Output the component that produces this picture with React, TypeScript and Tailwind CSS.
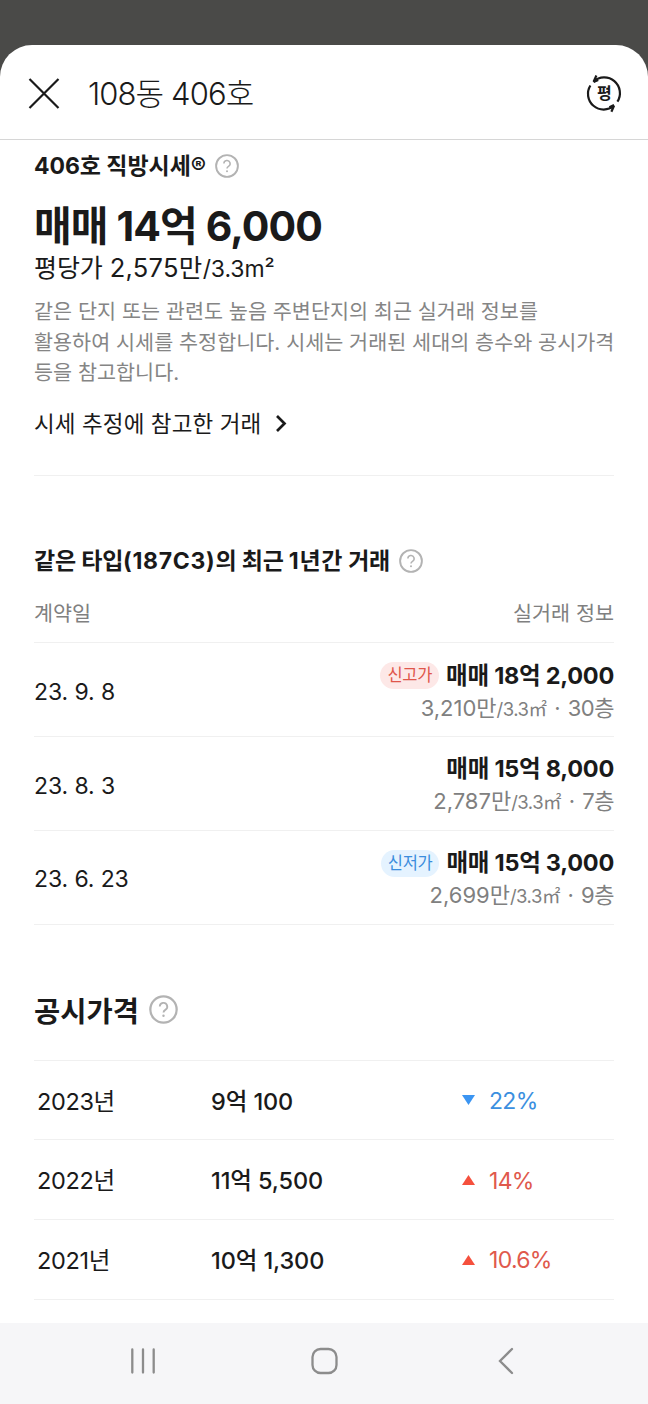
import { FC } from "react";

interface Deal {
  date: string;
  price: string;
  unitPrice: string;
  floor: string;
  badge?: "high" | "low";
}

interface PublicPrice {
  year: string;
  price: string;
  rate: string;
  up: boolean;
}

const deals: Deal[] = [
  { date: "23. 9. 8", price: "매매 18억 2,000", unitPrice: "3,210만", floor: "30층", badge: "high" },
  { date: "23. 8. 3", price: "매매 15억 8,000", unitPrice: "2,787만", floor: "7층" },
  { date: "23. 6. 23", price: "매매 15억 3,000", unitPrice: "2,699만", floor: "9층", badge: "low" },
];

const publicPrices: PublicPrice[] = [
  { year: "2023년", price: "9억 100", rate: "22%", up: false },
  { year: "2022년", price: "11억 5,500", rate: "14%", up: true },
  { year: "2021년", price: "10억 1,300", rate: "10.6%", up: true },
];

const HelpIcon: FC<{ size: number }> = ({ size }) => (
  <svg width={size} height={size} viewBox="0 0 24 24" fill="none" stroke="#b3b3b3" strokeWidth="1.9">
    <circle cx="12" cy="12" r="10.9" />
    <path d="M8.9 9.6a3.1 3.1 0 1 1 4.6 2.7c-1 .6-1.5 1.1-1.5 2.2" strokeWidth="1.5" />
    <circle cx="12" cy="17.2" r="1" fill="#b3b3b3" stroke="none" />
  </svg>
);

const UnitToggleIcon = () => (
  <svg width="36" height="40" viewBox="0 0 36 40" fill="none" stroke="#1a1a1a" strokeWidth="2.2">
    <path d="M10.4 1.5L7.6 7.6A15.7 15.7 0 0 1 31.4 27.7" />
    <path d="M4.4 11.5A15.7 15.7 0 0 0 28 31.7L25.4 37.7" />
    <path d="M7.6 8.1l4.6-2.2M28 31.1l-4.6 2.2" />
    <text
      x="18.3"
      y="25.3"
      textAnchor="middle"
      fill="#1a1a1a"
      stroke="none"
      className="text-[16px] font-bold"
    >
      평
    </text>
  </svg>
);

const Header = () => (
  <header className="flex h-[95px] items-center border-b border-[#d6d6d6] pt-[3px] pr-[26px] pl-[28px]">
    <svg width="32" height="32" viewBox="0 0 32 32" stroke="#1a1a1a" strokeWidth="2.2">
      <path d="M1.5 1l29 29M30.5 1l-29 29" />
    </svg>
    <h1 className="ml-[28px] flex-1 text-[31px] leading-[40px] font-light tracking-[-0.9px]">
      108동 406호
    </h1>
    <UnitToggleIcon />
  </header>
);

const Estimate = () => (
  <section className="border-b-[1.5px] border-[#f0f0f0] pb-[34px]">
    <div className="flex h-[52px] items-center gap-[9px]">
      <h2 className="text-[23px] leading-[30px] font-bold tracking-[-0.05px]">406호 직방시세®</h2>
      <HelpIcon size={24} />
    </div>
    <p className="mt-[9px] text-[41px] leading-[50px] font-bold tracking-[-0.9px]">
      매매 14억 6,000
    </p>
    <p className="text-[25px] leading-[34px] tracking-[-0.1px]">
      평당가 <span className="text-[25.5px] tracking-[0.3px]">2,575만</span>
      <span className="text-[23px]">/3.3m²</span>
    </p>
    <p className="mt-[11px] text-[20.7px] leading-[30.7px] tracking-[0.02px] whitespace-nowrap text-[#858585]">
      같은 단지 또는 관련도 높음 주변단지의 최근 실거래 정보를
      <br />
      활용하여 시세를 추정합니다. 시세는 거래된 세대의 층수와 공시가격
      <br />
      등을 참고합니다.
    </p>
    <button className="mt-[18px] flex items-center gap-[14px] text-[22.5px] leading-[34px] tracking-[0.1px]">
      시세 추정에 참고한 거래
      <svg width="12" height="18" viewBox="0 0 12 18" fill="none" stroke="#1a1a1a" strokeWidth="2.7">
        <path d="M2 1L9.5 8.5 2 16" />
      </svg>
    </button>
  </section>
);

const DealRow: FC<{ deal: Deal }> = ({ deal }) => (
  <li className="flex h-[93.8px] items-center justify-between border-b-[1.5px] border-[#f0f0f0]">
    <span className="mt-[5px] text-[23px] tracking-[-0.1px]">{deal.date}</span>
    <div className="mt-[6px] flex flex-col items-end">
      <div className="flex h-[32px] items-center gap-[7px]">
        {deal.badge === "high" && (
          <span className="h-[27px] rounded-full bg-[#fde8e7] px-[7px] text-[16.5px] leading-[27px] tracking-[-0.3px] text-[#e0564b]">
            신고가
          </span>
        )}
        {deal.badge === "low" && (
          <span className="h-[27px] rounded-full bg-[#e5f3ff] px-[7px] text-[16.5px] leading-[27px] tracking-[-0.3px] text-[#3b8ddd]">
            신저가
          </span>
        )}
        <strong className="text-[23.5px] leading-[32px] font-bold tracking-[-0.25px]">{deal.price}</strong>
      </div>
      <p className="text-[22px] leading-[33px] tracking-[-0.5px] text-[#808080]">
        <span className="tracking-[0px]">{deal.unitPrice}</span>
        <span className="text-[18.5px]">/3.3㎡</span>
        <span className="mx-[2px]"> · </span>
        {deal.floor}
      </p>
    </div>
  </li>
);

const RecentDeals = () => (
  <section className="pt-[70px]">
    <div className="flex h-[30px] items-center gap-[9px]">
      <h2 className="text-[23px] leading-[30px] font-bold tracking-[-0.2px]">
        같은 타입<span className="tracking-[0.7px]">(187C3)</span>의 최근{" "}
        <span className="tracking-[0.6px]">1년간</span> 거래
      </h2>
      <HelpIcon size={24} />
    </div>
    <div className="flex h-[67px] items-center justify-between border-b-[1.5px] border-[#f0f0f0] pt-[9px] text-[20.7px] text-[#808080]">
      <span>계약일</span>
      <span>실거래 정보</span>
    </div>
    <ul>
      {deals.map((deal) => (
        <DealRow key={deal.date} deal={deal} />
      ))}
    </ul>
  </section>
);

const PublicPrices = () => (
  <section className="pt-[66px]">
    <div className="flex h-[70px] items-start gap-[10px] border-b-[1.5px] border-[#f0f0f0]">
      <h2 className="text-[28.5px] leading-[42px] font-bold">공시가격</h2>
      <span className="mt-[4px]">
        <HelpIcon size={29} />
      </span>
    </div>
    <ul>
      {publicPrices.map((item) => (
        <li
          key={item.year}
          className="flex h-[79.7px] items-center border-b-[1.5px] border-[#f0f0f0] pt-[3px] pl-[3px] text-[23.5px]"
        >
          <span className="w-[174px] tracking-[-0.35px]">{item.year}</span>
          <span className="w-[251px] font-medium tracking-[-0.1px]">{item.price}</span>
          <svg width="13" height="10" viewBox="0 0 13 10" className="mb-[2px]">
            {item.up ? (
              <path d="M6.5 0L13 10H0z" fill="#f5503d" />
            ) : (
              <path d="M0 0h13L6.5 10z" fill="#3b95f2" />
            )}
          </svg>
          <span
            className={`ml-[14px] text-[23px] tracking-[-0.7px] ${item.up ? "text-[#e0594c]" : "text-[#3b8fe0]"}`}
          >
            {item.rate}
          </span>
        </li>
      ))}
    </ul>
  </section>
);

const SystemNav = () => (
  <nav className="flex h-[81px] items-center justify-between bg-[#f6f6f8] pr-[128px] pb-[5px] pl-[129px]">
    <svg width="28" height="28" viewBox="0 0 28 28" stroke="#8c8c8c" strokeWidth="2.3" strokeLinecap="round">
      <path d="M3.3 2.5v23M14 2.5v23M24.7 2.5v23" />
    </svg>
    <svg width="28" height="28" viewBox="0 0 28 28" fill="none" stroke="#8c8c8c" strokeWidth="2.3">
      <rect x="1.5" y="2" width="24" height="24" rx="8" />
    </svg>
    <svg width="28" height="28" viewBox="0 0 28 28" fill="none" stroke="#8c8c8c" strokeWidth="2.3" strokeLinecap="round">
      <path d="M20 2L8 14l12 12" />
    </svg>
  </nav>
);

const App: FC = () => {
  return (
    <div className="flex h-[1404px] w-[648px] flex-col overflow-hidden bg-[#4a4a48] pt-[45px] font-['Inter','Noto_Sans_CJK_KR',sans-serif] text-[#1a1a1a]">
      <div className="flex min-h-0 flex-1 flex-col overflow-hidden rounded-t-[32px] bg-white">
        <Header />
        <main className="min-h-0 flex-1 overflow-hidden px-[34px]">
          <Estimate />
          <RecentDeals />
          <PublicPrices />
        </main>
      </div>
      <SystemNav />
    </div>
  );
};

export default App;
